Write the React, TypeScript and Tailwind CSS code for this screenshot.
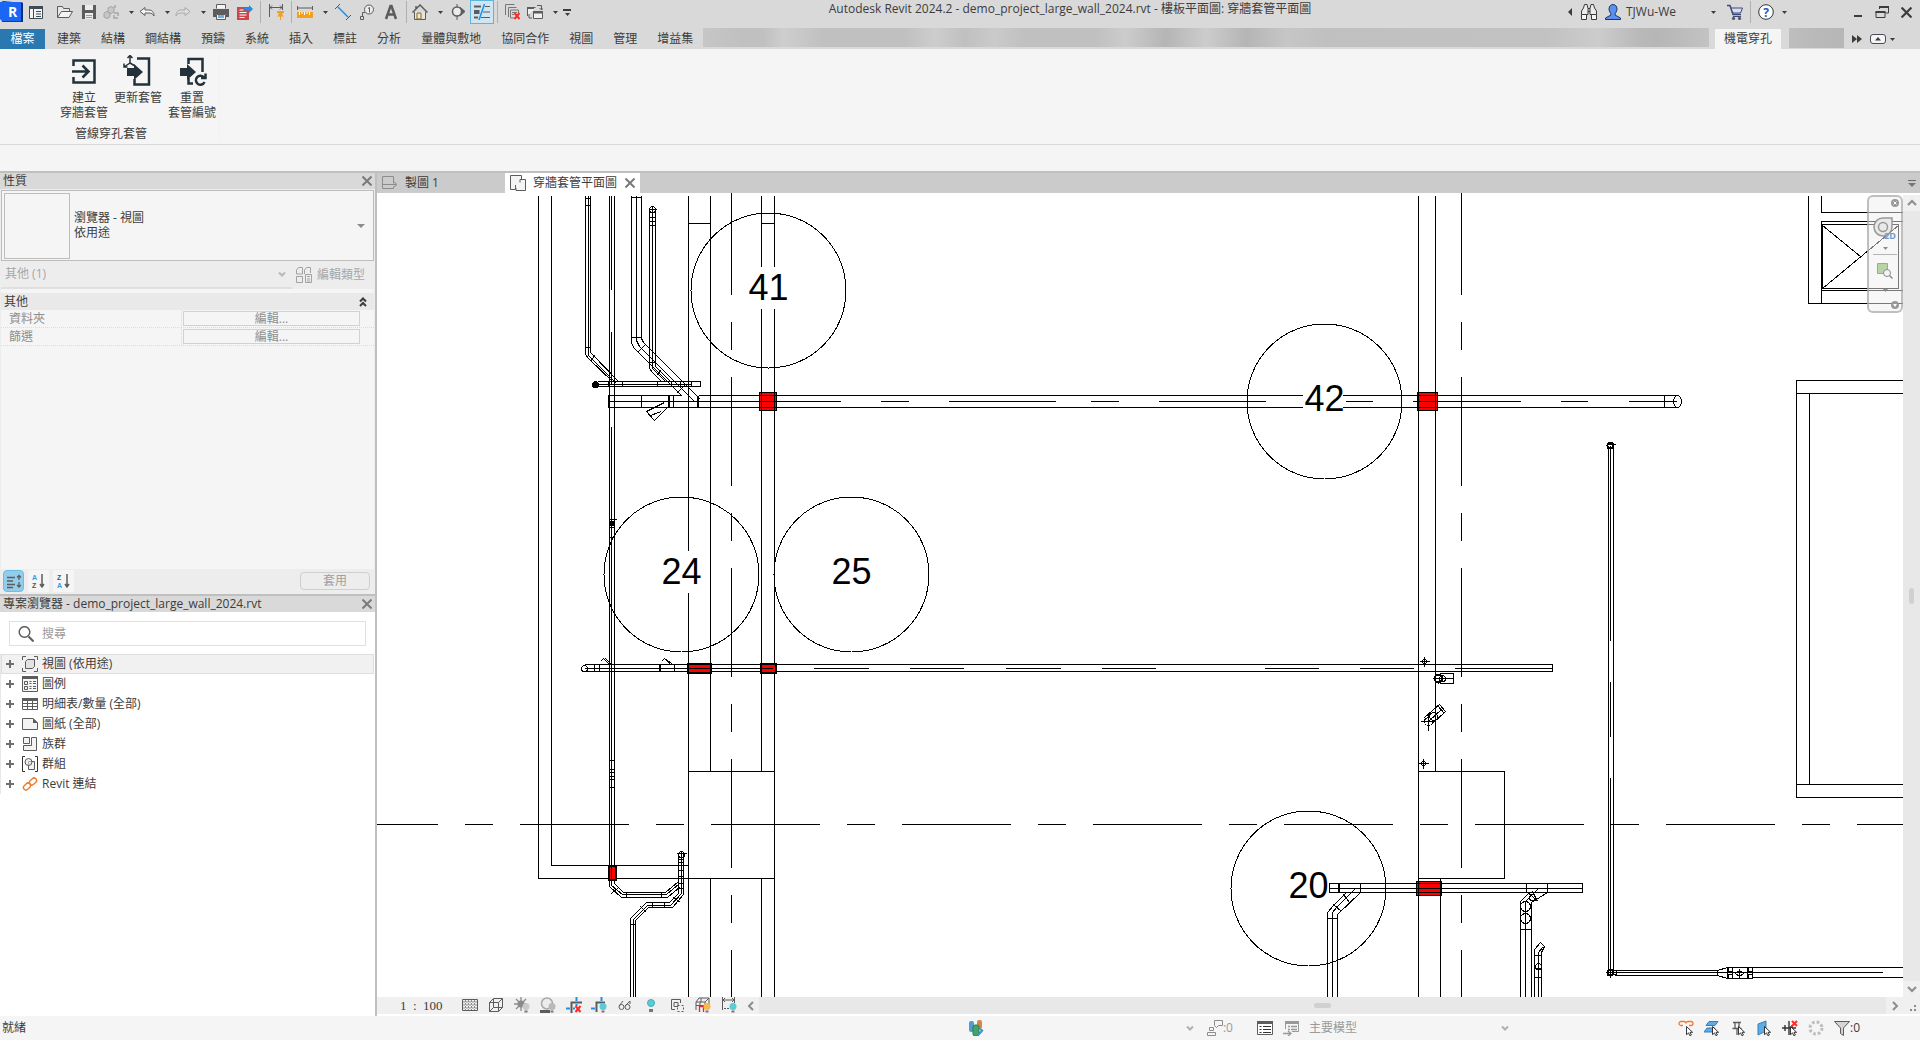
import React, { useState } from "react";
import clsx from "clsx";

const Icon = ({ children, className }: { children: React.ReactNode; className?: string }) => (
  <svg viewBox="0 0 16 16" fill="none" stroke="#5c5c5c" className={clsx("size-4 shrink-0", className)} aria-hidden="true">
    {children}
  </svg>
);

const Caret = ({ className = "text-[#3c3c3c]" }: { className?: string }) => (
  <svg viewBox="0 0 5 3" className={clsx("h-[3px] w-[5px] shrink-0", className)} aria-hidden="true">
    <path d="M0 0h5L2.5 3z" fill="currentColor" />
  </svg>
);

const Chevron = ({ d, className = "text-[#8c8c8c]" }: { d: string; className?: string }) => (
  <svg viewBox="0 0 10 10" fill="none" stroke="currentColor" strokeWidth="2" className={clsx("size-2.5 shrink-0", className)} aria-hidden="true">
    <path d={d} />
  </svg>
);

const CloseMark = ({ className = "size-2.5 text-[#7a7a7a]" }: { className?: string }) => (
  <svg viewBox="0 0 10 10" fill="none" stroke="currentColor" strokeWidth="2" className={clsx("shrink-0", className)} aria-hidden="true">
    <path d="M.5.5l9 9M9.5.5l-9 9" />
  </svg>
);

const Separator = () => <div className="mx-[3px] h-[22px] w-px shrink-0 bg-[#b0b0b0]" />;

const ToolButton = ({ label, split, active, children }: { label: string; split?: boolean; active?: boolean; children: React.ReactNode }) => (
  <>
    <button
      aria-label={label}
      className={clsx(
        "flex h-6 w-6 shrink-0 items-center justify-center",
        split && "pr-1",
        active && "border border-[#5fb3dc] bg-[#cfe6f2]"
      )}
    >
      {children}
    </button>
    {split && (
      <button aria-label={`${label} menu`} className="flex h-6 w-3 shrink-0 items-center justify-center">
        <Caret />
      </button>
    )}
  </>
);

const Cursor = () => <path d="M8.500 6.500v8.200l2-1.800 1.400 2.800 1.500-.7-1.400-2.700h2.600z" fill="#fff" stroke="#222" strokeWidth=".9" />;
const Bulb = ({ fill }: { fill: string }) => (
  <>
    <circle cx="12" cy="9.500" r="3.500" fill={fill} stroke="none" />
    <path d="M10.500 13.500h3v2h-3z" fill="#777" stroke="none" />
  </>
);
const RedX = () => <path d="M9.500 9l5 6M14.500 9l-5 6" stroke="#ff2a2a" strokeWidth="2" />;

const QuickAccess = () => (
  <div className="flex shrink-0 items-center">
    <button aria-label="Revit" className="w-6">
      <svg viewBox="0 0 24 24" className="size-6" aria-hidden="true">
        <path d="M0 3l3-2 20 2v19H2z" fill="#0c3c9c" />
        <path d="M0 2h21v19H2L0 19z" fill="#1a66f5" />
        <path d="M21 2l2 1v19l-2-1z" fill="#0a2f80" />
        <text x="8" y="17" fontFamily="Open Sans, sans-serif" fontSize="14" fontWeight="700" fill="#fff">R</text>
      </svg>
    </button>
    <ToolButton label="Home">
      <Icon>
        <path d="M1.500 2.500h13v12h-13z" fill="#f5f5f5" stroke="#3f4a52" />
        <path d="M1 2h14v3H1z" fill="#3f4a52" stroke="none" />
        <path d="M5.500 5v10M8 7.500h5M8 10h5M8 12.500h5" stroke="#3f4a52" />
      </Icon>
    </ToolButton>
    <div className="w-[5px]" />
    <ToolButton label="Open">
      <Icon>
        <path d="M.500 13.500v-11h5l1 2h6v3" fill="#e8e8e8" />
        <path d="M.500 13.500l4-6h11l-3.500 6z" fill="#f4f4f4" />
      </Icon>
    </ToolButton>
    <ToolButton label="Save">
      <Icon>
        <path d="M1 1h14v14H1z" fill="#5c5c5c" stroke="none" />
        <path d="M4 1h8v5H4zM4 9h8v6H4z" fill="#ececec" stroke="none" />
        <path d="M5 11.500h6M5 13.500h6" stroke="#9a9a9a" />
      </Icon>
    </ToolButton>
    <ToolButton label="Synchronize" split>
      <Icon>
        <path d="M5 4l3-1.500L11 4v4L8 9.500 5 8zM1 9l3-1.500L7 9v4l-3 1.500L1 13z" fill="#c6c6c6" stroke="#a5a5a5" />
        <path d="M12 1v3M11 9h4v3M15 14h-4v-3" stroke="#a5a5a5" strokeWidth="1.500" />
      </Icon>
    </ToolButton>
    <ToolButton label="Undo" split>
      <Icon><path d="M1 7.500l5-4v2.500h4c3 0 5 2 5 6-1-2-2.500-3-5-3H6v2.500z" fill="#f4f4f4" /></Icon>
    </ToolButton>
    <ToolButton label="Redo" split>
      <Icon><path d="M15 7.500l-5-4v2.500H6c-3 0-5 2-5 6 1-2 2.500-3 5-3h4v2.500z" fill="#dedede" stroke="#a8a8a8" /></Icon>
    </ToolButton>
    <ToolButton label="Print">
      <Icon>
        <path d="M3.500 4.500v-4h9v4M3.500 15.500v-5h9v5z" fill="#f4f4f4" />
        <path d="M0 5h16v8h-3v-3H3v3H0z" fill="#5c5c5c" stroke="none" />
        <path d="M5 11h6v3H5z" fill="#6ab0e6" stroke="none" />
      </Icon>
    </ToolButton>
    <ToolButton label="Export PDF">
      <Icon>
        <path d="M0 3h12v13H0z" fill="#c9474b" stroke="none" />
        <path d="M2.500 6h4M2.500 8.500h7M2.500 11h7M2.500 13.500h5" stroke="#fff" />
        <path d="M6 3.500h6V1l4 4-4 4V6.500H9" fill="#1d8fe6" stroke="none" />
      </Icon>
    </ToolButton>
    <Separator />
    <ToolButton label="Aligned dimension">
      <Icon>
        <path d="M1.500 0v13M14.500 0v6M2 3.500h12M4 1.500l-2 2 2 2M12 1.500l2 2-2 2" />
        <path d="M9 7h7v2h-1.500v2l1.500 1.500h-3V16h-1v-3.500H9l1.500-1.500V9H9z" fill="#f2a01e" stroke="none" />
      </Icon>
    </ToolButton>
    <Separator />
    <ToolButton label="Measure" split>
      <Icon>
        <path d="M.500 2v4M15.500 2v4M1 4h14" />
        <path d="M0 8h16v6H0z" fill="#f2a01e" stroke="none" />
        <path d="M2.500 8v3M5 8v2M7.500 8v3M10 8v2M12.500 8v3" stroke="#fff" />
      </Icon>
    </ToolButton>
    <ToolButton label="Dimension">
      <Icon>
        <path d="M3 3l10 10" stroke="#1d8fe6" strokeWidth="1.500" />
        <path d="M0 5l5-5M11 16l5-5" stroke="#555" />
      </Icon>
    </ToolButton>
    <ToolButton label="Tag">
      <Icon>
        <circle cx="10" cy="5.500" r="4.500" fill="#ececec" />
        <path d="M9 4.500l1.500-1v5M6 8.500H3.500v4M1.500 12.500h3v3h-3z" />
      </Icon>
    </ToolButton>
    <ToolButton label="Text">
      <Icon><path d="M3 15L7.500 2h1L13 15M4.500 10.500h7" strokeWidth="2.500" /></Icon>
    </ToolButton>
    <Separator />
    <ToolButton label="3D view" split>
      <Icon>
        <path d="M2.500 8v7.500h11V8" fill="#e4e4e4" />
        <path d="M.500 8.500L8 1l7.500 7.500M4 5V2" strokeWidth="1.500" />
        <path d="M5 9h4v6H5z" fill="#ffe7a8" stroke="#7a6a3a" />
      </Icon>
    </ToolButton>
    <ToolButton label="Section">
      <Icon>
        <circle cx="7" cy="7.500" r="4.500" fill="#ececec" strokeWidth="1.500" />
        <path d="M7 0v3M7 12v4" />
        <path d="M10.500 3.500l4.500 4-4.500 4c2-3 2-5 0-8z" fill="#5c5c5c" />
      </Icon>
    </ToolButton>
    <ToolButton label="Thin lines" active>
      <Icon>
        <path d="M0 2.500h7M0 13.500h4" strokeWidth="2" />
        <path d="M0 8h5.500" strokeWidth="4" />
        <path d="M11 2.500h5M9 8h7M7 13.500h9" />
        <path d="M10.500 0L5 16" stroke="#1d8fe6" strokeWidth="1.500" />
      </Icon>
    </ToolButton>
    <Separator />
    <ToolButton label="Close inactive views">
      <Icon>
        <path d="M.500 11V.500h9M3.500 13V3.500h8M10 14H5.500v-8h8v3" stroke="#777" />
        <path d="M7 8.500h5M7 10.500h2" stroke="#777" />
        <RedX />
      </Icon>
    </ToolButton>
    <ToolButton label="Switch windows" split>
      <Icon>
        <path d="M.500 12V3.500h8M6.500 7.500h9v7h-9z" fill="#f0f0f0" />
        <path d="M6 8.500h10M0 4h7" strokeWidth="2" />
        <path d="M10 1.500h4.500v4M12.500 4l2 2 2-2M2 10v4h3" />
      </Icon>
    </ToolButton>
    <button aria-label="Customize toolbar" className="flex h-6 w-3 flex-col items-center justify-center gap-0.5">
      <span className="h-0.5 w-2 bg-[#3c3c3c]" />
      <Caret />
    </button>
  </div>
);

const AccountBar = () => (
  <div className="flex shrink-0 items-center text-[#3c3c3c]">
    <button aria-label="Collapse search" className="w-2.5 pl-px">
      <svg viewBox="0 0 4 8" className="h-2 w-1" aria-hidden="true"><path d="M4 0v8L0 4z" fill="#3c3c3c" /></svg>
    </button>
    <ToolButton label="Search">
      <Icon>
        <path d="M3.500.500h2.500l1 4v6H.500V7l2-3zM12.500.500H10l-1 4v6h6.500V7l-2-3z" fill="#ececec" stroke="#3a3a3a" />
        <path d="M.500 10.500h5v5h-5zM10.500 10.500h5v5h-5zM7 4.500h2M7 7.500h2" fill="#f5f5f5" stroke="#3a3a3a" />
      </Icon>
    </ToolButton>
    <button className="flex w-[106px] items-center gap-[5px] px-1 text-xs">
      <Icon>
        <path d="M4 5c0-6 8-6 8 0 0 3-2 3.500-2 6l5.500 3v1.500H.500V14L6 11c0-2.500-2-3-2-6z" fill="#5b8ff0" stroke="#22345e" />
      </Icon>
      TJWu-We
    </button>
    <button aria-label="Account menu" className="mr-1 flex w-3 justify-center"><Caret /></button>
    <ToolButton label="App store">
      <Icon>
        <path d="M0 1.500h3l3 9h8" stroke="#3d4a78" strokeWidth="1.500" />
        <path d="M4 4h11.500l-2 5H6z" fill="#d9def0" stroke="#3d4a78" />
        <path d="M6 12.500h8" stroke="#3d4a78" />
        <circle cx="6.500" cy="14.500" r="1.200" fill="#3d4a78" /><circle cx="12.500" cy="14.500" r="1.200" fill="#3d4a78" />
      </Icon>
    </ToolButton>
    <Separator />
    <ToolButton label="Help">
      <Icon>
        <circle cx="8" cy="8" r="7.300" fill="#fff" stroke="#333" />
        <text x="8" y="12.500" textAnchor="middle" fontFamily="Open Sans, sans-serif" fontSize="12" fontWeight="700" fill="#2457c5" stroke="none">?</text>
      </Icon>
    </ToolButton>
    <button aria-label="Help menu" className="flex w-3 justify-center"><Caret /></button>
    <div className="w-14" />
    <ToolButton label="Minimize"><span className="mt-2 h-0.5 w-2 bg-[#3c3c3c]" /></ToolButton>
    <ToolButton label="Restore">
      <Icon><path d="M5.500 5V3h9v6h-3M2 8h9v5.500H2z" stroke="#3c3c3c" /><path d="M5 3h10M1.500 8h10" stroke="#3c3c3c" strokeWidth="2" /></Icon>
    </ToolButton>
    <ToolButton label="Close"><CloseMark className="size-[11px] text-[#3c3c3c]" /></ToolButton>
    <div className="w-0.5" />
  </div>
);

const ribbonTabs = ["建築", "結構", "鋼結構", "預鑄", "系統", "插入", "標註", "分析", "量體與敷地", "協同合作", "視圖", "管理", "增益集"];

const RibbonTabs = () => (
  <nav className="flex h-[21px] items-stretch pt-px text-xs leading-5">
    <button className="w-[45px] shrink-0 bg-[#2a78b0] text-white">檔案</button>
    <div className="flex shrink-0 gap-5 pl-3">
      {ribbonTabs.map((tab) => (
        <button key={tab} className="whitespace-nowrap">{tab}</button>
      ))}
    </div>
    <div className="-mt-px mb-0.5 ml-2.5 flex-1 bg-[linear-gradient(90deg,#c6c6c6,#c0c0c0_4%,#c0c0c0_6%,#cecece_8%,#c0c0c0_12%,#c0c0c0_20%,#cdcdcd_23%,#c0c0c0_26%,#cacaca_29%,#c0c0c0_32%,#c0c0c0_39%,#cccccc_42%,#b5b5b5_46%,#cccccc_50%,#b5b5b5_54%,#c6c6c6_58%,#c0c0c0_62%,#c2c2c2_80%,#c2c2c2_84%,#cccccc_89%,#b9b9b9_93%,#b6b6b6_95%,#c3c3c3)]" />
    <button className="ml-1.5 w-[66px] shrink-0 bg-[#f5f5f5]">機電穿孔</button>
    <div className="-mt-px mb-px ml-2 w-[55px] shrink-0 bg-[linear-gradient(90deg,#bebebe,#b9b9b9_50%,#b6b6b6)]" />
    <button aria-label="More tabs" className="ml-2 flex items-center">
      <svg viewBox="0 0 10 8" className="h-2 w-2.5" aria-hidden="true"><path d="M0 0l5 4-5 4zM5 0l5 4-5 4z" fill="#3c3c3c" /></svg>
    </button>
    <button aria-label="Minimize ribbon" className="mr-[25px] ml-2 flex items-center gap-1">
      <svg viewBox="0 0 16 10" className="h-2.5 w-4" aria-hidden="true">
        <rect x=".5" y=".5" width="15" height="9" rx="2.500" fill="#f5f5f5" stroke="#4a4a5a" />
        <path d="M5 6.500h6L8 3z" fill="#3c3c3c" />
      </svg>
      <Caret />
    </button>
  </nav>
);

const ribbonCommands = [
  {
    lines: ["建立", "穿牆套管"],
    icon: (
      <>
        <path d="M5.500 11V5.500h21v22h-21V22" strokeWidth="2.500" />
        <path d="M4 16.500h16M14.500 10.500l6 6-6 6" strokeWidth="2.500" />
      </>
    ),
  },
  {
    lines: ["更新套管"],
    icon: (
      <>
        <path d="M15 3.500h12v26H12.500V24" strokeWidth="2.500" />
        <path d="M5 13h7V9l9 8-9 8v-4H5z" fill="#22313a" stroke="none" />
        <path d="M8 8V1M5.500 3L8 .500 10.500 3M8 8l-6 4M2 8.500V12h3.500M8 8l5 3" strokeWidth="1.500" />
      </>
    ),
  },
  {
    lines: ["重置", "套管編號"],
    icon: (
      <>
        <path d="M12.500 9V4h14v13M12.500 23v5.500H17" strokeWidth="2.500" />
        <path d="M4 13h7V9l9 8-9 8v-4H4z" fill="#22313a" stroke="none" />
        <path d="M28 22.500a4.500 4.500 0 1 0 .5 4.500M29.500 18.500v4.500h-4.500" strokeWidth="2.500" />
      </>
    ),
  },
];

const Ribbon = () => (
  <div className="flex h-24 border-b border-[#d9d9d9] bg-[#f5f5f5] pl-[57px]">
    <div className="flex flex-col">
      <div className="flex h-[77px] pt-1.5">
        {ribbonCommands.map((command) => (
          <button key={command.lines[0]} className="flex w-[54px] flex-col items-center text-xs leading-[15px] whitespace-nowrap">
            <svg viewBox="0 0 32 32" fill="none" stroke="#22313a" className="mb-[3px] size-8 shrink-0" aria-hidden="true">{command.icon}</svg>
            {command.lines.map((line) => (
              <span key={line}>{line}</span>
            ))}
          </button>
        ))}
      </div>
      <div className="w-[108px] self-start text-center text-xs leading-4">管線穿孔套管</div>
    </div>
    <div className="my-px w-px bg-[#f1f1f1]" />
  </div>
);

const PaletteHeader = ({ title }: { title: string }) => (
  <div className="flex h-4 shrink-0 items-center justify-between bg-[#d9d9d9] px-[3px] leading-4">
    <h2>{title}</h2>
    <button aria-label={`關閉 ${title}`}><CloseMark /></button>
  </div>
);

const sortButtons = [
  { label: "預設排序", on: true },
  { label: "A-Z", on: false, a: "A", b: "Z" },
  { label: "Z-A", on: false, a: "Z", b: "A" },
];

const Properties = () => (
  <section className="flex h-[421px] shrink-0 flex-col bg-[#ededed]">
    <PaletteHeader title="性質" />
    <button aria-haspopup="listbox" className="mx-px mt-px flex h-[71px] shrink-0 items-center gap-1 border border-[#bdbdbd] bg-[#f5f5f5] p-0.5 text-left">
      <span className="h-[66px] w-[66px] shrink-0 border border-[#bdbdbd]" />
      <span className="flex-1 pb-0.5 leading-[15px]">瀏覽器 - 視圖<br />依用途</span>
      <svg viewBox="0 0 8 4" className="mr-1.5 h-1 w-2" aria-hidden="true"><path d="M0 0h8L4 4z" fill="#8c8c8c" /></svg>
    </button>
    <div className="flex h-7 shrink-0 items-center text-[#a6a6a6]">
      <div className="ml-px flex flex-1 items-center self-stretch border-b-2 border-[#e0e0e0] pr-[5px]">
        <select aria-label="類型篩選" disabled className="flex-1 appearance-none pl-1">
          <option>其他 (1)</option>
        </select>
        <Chevron d="M2 3.500L5 6.500 8 3.500" className="text-[#b8b8b8]" />
      </div>
      <button disabled className="ml-1 flex items-center gap-[5px] pr-2.5">
        <Icon>
          <path d="M.500 7V3l2-2.500h4V7zM8.500 7V3l2-2.500h4V6M.500 15.500V9.500h6v6zM9.500 7.500h6v8h-6zM11 9.500h3M11 12h3M11 14h3" stroke="#a3a3a3" />
        </Icon>
        編輯類型
      </button>
    </div>
    <div className="mx-px flex flex-1 flex-col bg-[#f5f5f5] pt-1">
      <div className="flex h-[17px] items-center justify-between bg-[#e9e9e9] pr-1.5 pl-[3px]">
        <h3>其他</h3>
        <Chevron d="M2 4.500L5 1.500 8 4.500M2 9L5 6 8 9" className="text-[#3c3c3c]" />
      </div>
      {["資料夾", "篩選"].map((row) => (
        <div key={row} className="flex h-[18px] items-center border-b border-dotted border-[#dcdcdc] pr-3.5 text-[#8e8e8e]">
          <span className="w-[181px] border-r border-dotted border-[#dcdcdc] pl-2 leading-[17px]">{row}</span>
          <button disabled aria-label={`編輯 ${row}`} className="ml-px h-[15px] flex-1 border border-[#d2d2d2] leading-[13px]">編輯...</button>
        </div>
      ))}
    </div>
    <div className="flex h-[25px] shrink-0 items-center gap-1 pr-[5px] pb-0.5 pl-[3px]">
      {sortButtons.map((s) => (
        <button
          key={s.label}
          aria-label={s.label}
          aria-pressed={s.on}
          className={clsx("flex h-[22px] w-[21px] items-center justify-center border", s.on ? "rounded-sm border-[#6bbce6] bg-[#93cdea]" : "border-transparent bg-[#f5f5f5]")}
        >
          <Icon className="overflow-visible">
            {s.on ? (
              <path d="M1 4.500h8M1 8h6M1 11.500h8M1 14.500h6M13 2v5M11 4.500l2-2 2 2M13 9v5M11 12l2 2 2-2" strokeWidth="1.300" />
            ) : (
              <>
                <text x="1" y="6.500" fontSize="7" fontWeight="700" fontFamily="Liberation Sans, Arial, sans-serif" stroke="none" fill={s.a === "A" ? "#2f9be8" : "#555"}>{s.a}</text>
                <text x="1" y="15" fontSize="7" fontWeight="700" fontFamily="Liberation Sans, Arial, sans-serif" stroke="none" fill={s.b === "A" ? "#2f9be8" : "#555"}>{s.b}</text>
                <path d="M11 1v12M9 11l2 3 2-3" strokeWidth="1.500" />
              </>
            )}
          </Icon>
        </button>
      ))}
      <button disabled className="ml-auto h-[18px] w-[70px] rounded-sm border border-[#cfcfcf] leading-4 text-[#a0a0a0]">套用</button>
    </div>
  </section>
);

const treeItems = [
  {
    label: "視圖 (依用途)",
    icon: (
      <>
        <path d="M4 .500H.500V4M12 .500h3.500V4M.500 12v3.500H4M15.500 12v3.500H12" />
        <path d="M3.500 5.500l2-2h7v7l-2 2h-7z" fill="#e2e2e2" />
      </>
    ),
  },
  {
    label: "圖例",
    icon: (
      <>
        <path d="M.500.500h15v15H.500z" fill="#f5f5f5" /><path d="M0 0h16v3H0z" fill="#5c5c5c" stroke="none" />
        <path d="M2.500 5.500h3v3h-3zM2.500 10.500h3v3h-3zM7.500 5.500h2M11 5.500h3M7.500 7.500h2M11 7.500h3M7.500 10.500h2M11 10.500h3M7.500 12.500h2M11 12.500h3" />
      </>
    ),
  },
  {
    label: "明細表/數量 (全部)",
    icon: (
      <>
        <path d="M0 2h16v3H0z" fill="#5c5c5c" stroke="none" />
        <path d="M.500 2.500h15v11H.500zM.500 7.500h15M.500 10.500h15M5.500 5v9M10.500 5v9" />
      </>
    ),
  },
  {
    label: "圖紙 (全部)",
    icon: (
      <>
        <path d="M.500 2.500H11L15.500 7v6.500H.500z" fill="#f3f3f3" />
        <path d="M11 2v5h5z" fill="#5c5c5c" stroke="none" />
      </>
    ),
  },
  { label: "族群", icon: <path d="M1.500 1.500h6v6h-6zM1.500 9.500h8v-8h5v13h-13z" fill="#f3f3f3" /> },
  {
    label: "群組",
    icon: (
      <>
        <path d="M3 .500H.500v15H3M13 .500h2.500v15H13" stroke="#333" />
        <path d="M6.500 8.500V5.500h6v8h-6z" fill="#f3f3f3" />
        <circle cx="6.500" cy="6" r="3.500" fill="#e4e4e4" fillOpacity=".6" />
      </>
    ),
  },
  {
    label: "Revit 連結",
    icon: (
      <g stroke="#ee7d2f" strokeWidth="1.400">
        <rect x="-4" y="-2.500" width="8" height="5" rx="2.500" transform="translate(5 10.500) rotate(-45)" />
        <rect x="-4" y="-2.500" width="8" height="5" rx="2.500" transform="translate(11 5.500) rotate(-45)" />
      </g>
    ),
  },
];

const ProjectBrowser = () => {
  const [selected, setSelected] = useState(0);
  return (
    <section className="flex min-h-0 flex-1 flex-col border-t-2 border-[#bfbfbf] bg-white">
      <PaletteHeader title="專案瀏覽器 - demo_project_large_wall_2024.rvt" />
      <label className="mx-[9px] mt-[9px] flex h-[25px] shrink-0 items-center gap-2 border border-[#e0e0e0] pl-2">
        <Icon><circle cx="6.500" cy="6" r="5.300" strokeWidth="1.500" /><path d="M10.500 10.500l5 5" strokeWidth="2" /></Icon>
        <input aria-label="搜尋" placeholder="搜尋" className="min-w-0 flex-1 outline-none placeholder:text-[#9a9a9a]" />
      </label>
      <ul className="mt-2 border-l border-[#e8e8e8] pr-px">
        {treeItems.map((item, i) => (
          <li key={item.label}>
            <button
              onClick={() => setSelected(i)}
              className={clsx("flex h-5 w-full items-center gap-1 border pl-1 text-left", i === selected ? "border-[#dedede] bg-[#f1f1f1]" : "border-transparent")}
            >
              <svg viewBox="0 0 8 8" className="mr-1 size-2" aria-hidden="true"><path d="M4 0v8M0 4h8" stroke="#6e6e6e" strokeWidth="2" /></svg>
              <Icon>{item.icon}</Icon>
              {item.label}
            </button>
          </li>
        ))}
      </ul>
    </section>
  );
};

// number bubbles placed beside each wall sleeve
const tags = [
  { n: "41", x: 768, y: 290 },
  { n: "42", x: 1324, y: 401 },
  { n: "24", x: 681, y: 574 },
  { n: "25", x: 851, y: 574 },
  { n: "20", x: 1308, y: 888 },
];

const PlanDrawing = () => (
  <svg className="absolute inset-0 h-full w-full" role="img" aria-label="穿牆套管平面圖" shapeRendering="crispEdges">
    <g transform="translate(-376.500 -192.500)" fill="none" stroke="#000">
      {/* walls */}
      <path d="M538 195V878H774M551 195V865H688M688 195V550M688 592V997M710 195V771M710 878V997M761 195V266M761 308V771M761 878V997M774 195V266M774 308V997M688 771H774M688 223H710M761 223H774" />
      <path d="M1418 195V997M1435 195V771M1440 878V997M1418 771H1504V878H1418" />
      <path d="M1808 195V303H1903M1821 195V212H1903M1903 221H1821V303M1821 290H1903M1822 224H1898V288H1822zM1822 225L1860 256M1822 288L1898 225" />
      <path d="M1903 380H1796V797H1903M1796 393H1903M1809 393V784M1796 784H1903" />
      {/* grid lines */}
      <path d="M731 185V997M1461 185V997M328 824H1903" strokeDasharray="109 27 28 27" />
      {/* pipes on the upper left */}
      <path d="M585 195V354L588 358 613 382M588 195V355L616 383M590 195V352L619 382M585 205H590M585 198H590M585 347H590M590 361L594 355" />
      <path d="M609 195V866M614 195V866M611 195V289M611 331V384M611 426V866M609 537H614M609 760H614M609 769H614M609 772H614M609 776H614M609 779H614M609 787H614M608 519H616M609 527H614" />
      <path d="M610 521h4v4h-4z" fill="#000" />
      <path d="M631 195V343L634 348 681 395M636 195V340L639 346 694 401M641 195V338L643 342 700 399M631 197H641M631 337H641M637 352L645 344M676 393L684 385" />
      <path d="M649 209V368L652 372 662 382M652 209V368L666 382M655 209V366L671 382M649 217H655M649 221H655M649 225H655M649 362H655M656 375L660 370" />
      <circle cx="652" cy="209" r="3" /><path d="M652 205V213M648 209H656" />
      <path d="M597 381H700V386H597M593 384H690M608 381V386M622 381V386M657 381V386M671 381V386M680 381V386M691 381V386" />
      <circle cx="595" cy="384" r="3" fill="#000" />
      {/* duct through sleeves 41 and 42 */}
      <path d="M1676 395H1342M1302 395H698M681 395H608V407H1302M1342 407H1676M608 401H840M641 395V407M673 395V407M1664 395V407" />
      <path d="M668.500 395V407M697.500 395V407" strokeWidth="2" />
      <path d="M880 401H908M948 401H1055M1090 401H1118M1158 401H1265M1345 401H1372M1412 401H1520M1560 401H1587M1628 401H1676" />
      <ellipse cx="1677" cy="401" rx="4" ry="6" />
      <path d="M664 402L646 411 654 420 667 407M661 411L650 415" />
      {/* pipe through sleeves 24 and 25 */}
      <path d="M584 664H1552V671H584M584 668H772M594 664V671M599 664V671M674 664V671M614 664V671M813 668H868M909 668H963M1005 668H1060M1101 668H1155M1264 668H1318M1359 668H1413M1454 668H1552" />
      <path d="M659.500 664V671" strokeWidth="2" />
      <circle cx="584" cy="668" r="3" />
      <path d="M600 661L603 658 610 665M605 658L611 664M661 661L664 658 671 665M666 659L672 664" />
      {/* bottom left loops */}
      <path d="M609 880V886L621 897H667L680 886M611 880V885L622 894H666L679 883M614 880V883L623 892H665L678 881M626 892V897M661 892V897M611 893L618 887" />
      <path d="M683 853V894L672 907H648L635 920V997M681 853V893L670 905H647L633 919V997M678 853V893L669 902H646L630 918V997M630 924H635M652 902V907M664 902V907M678 870H683M678 876H683M678 883H683M678 888H683M673 897L680 902M640 906L646 912" />
      <circle cx="681" cy="854" r="3" /><path d="M676 853H686M681 850V860M678 859H683M678 862H683" />
      {/* pipe through sleeve 20 */}
      <path d="M1329 883H1582V892H1329zM1329 888H1582M1360 883V892M1385 883V892M1526 883V892M1547 883V892" />
      <path d="M1338.500 883V892" strokeWidth="2" />
      <path d="M1327 997V912L1333 905 1346 892M1332 997V912L1337 906 1355 888M1337 997V914L1360 892M1327 918H1337M1333 904L1341 911M1343 894L1349 902" />
      <path d="M1520 997V901L1529 892M1525 997V901L1537 889M1531 997V902L1547 892M1520 929H1531M1527 892L1538 901M1532 891L1536 899" />
      <circle cx="1525" cy="906" r="5" /><circle cx="1525" cy="918" r="5" /><circle cx="1532" cy="897" r="3" />
      <path d="M1534 997V949L1540 942 1544 946 1541 952V997M1538 997V952L1542 947M1534 955H1541M1534 968H1541M1534 977H1541" />
      <circle cx="1538" cy="966" r="3" />
      {/* risers */}
      <path d="M1419 661H1429M1424 656V666M1418 763H1428M1423 758V768" />
      <circle cx="1424" cy="661" r="2" /><circle cx="1423" cy="763" r="2" />
      <path d="M1439 673H1453V683H1439M1434 678H1453" />
      <circle cx="1438" cy="678" r="4" strokeWidth="2" /><circle cx="1442" cy="678" r="3" />
      <path d="M1420 721H1433M1428 713V730M1424 717L1439 704 1445 711 1432 723M1428 721L1442 708M1437 705L1444 713" />
      <circle cx="1428" cy="721" r="4" /><circle cx="1433" cy="716" r="4" />
      {/* riser run on the right */}
      <path d="M1608 445V970M1613 445V970M1610 445V640M1610 681V736M1610 777V972M1614 970H1717L1727 967M1614 972H1727M1614 975H1717L1727 978M1717 970V975M1752 967H1903M1727 972H1882M1752 977H1903M1727 967H1752V978H1727zM1732 967V978M1747 967V978" />
      <path d="M1728 967h4v4h-4zM1728 974h4v4h-4zM1748 967h4v4h-4zM1748 974h4v4h-4zM1735 973l4-3 4 3-4 3zM1739 968V978" />
      <circle cx="1610" cy="445" r="3" strokeWidth="2" /><circle cx="1610" cy="972" r="3" strokeWidth="2" />
      <path d="M1606 444H1615M1606 972H1616M1610 967V977M1613 970h3v4h-3z" />
      {/* sleeves */}
      <g fill="#f00">
        <path d="M759 392h17v18h-17zM1417 392h20v18h-20z" />
        <path d="M687.500 663.500h23v9h-23zM760.500 663.500h15v9h-15z" strokeWidth="2" />
        <path d="M1416 881h25v14h-25z" />
        <path d="M608.500 865.500h7v14h-7z" strokeWidth="2" />
      </g>
      <path d="M761 392V410M774 392V410M759 395H776M759 401H776M759 407H776M1418 392V410M1435 392V410M1417 395H1437M1417 401H1437M1417 407H1437" />
      <path d="M687 668H711M760 668H772M1416 883H1441M1416 888H1441M1416 892H1441M1418 881V895M1440 881V895M611 864V880" />
      {tags.map((tag) => (
        <g key={tag.n}>
          <circle cx={tag.x} cy={tag.y} r="77.500" />
          <text x={tag.x} y={tag.y + 9} textAnchor="middle" fontFamily="Liberation Sans, Arial, sans-serif" fontSize="36" fill="#000" stroke="none">{tag.n}</text>
        </g>
      ))}
    </g>
  </svg>
);

const NavigationBar = () => (
  <div className="absolute top-0.5 right-0 flex h-[118px] w-9 flex-col items-center rounded-md border-2 border-[#999]/60 bg-[#f0f0f0]/50 text-[#8c8c8c]">
    <button aria-label="關閉導覽列" className="mr-0.5 self-end">
      <svg viewBox="0 0 8 8" className="mt-0.5 size-2" aria-hidden="true"><circle cx="4" cy="4" r="4" fill="#999" /><path d="M2.500 2.500l3 3M5.500 2.500l-3 3" stroke="#fff" /></svg>
    </button>
    <button aria-label="2D 導覽輪" className="mt-2.5 flex flex-col items-center gap-1.5">
      <svg viewBox="0 0 26 24" className="h-6 w-[26px]" aria-hidden="true">
        <path d="M11 1h9v9a9 9 0 1 1-9-9z" fill="#e9e9e9" stroke="#999" strokeWidth="1.500" />
        <circle cx="11" cy="10" r="4.500" fill="none" stroke="#999" strokeWidth="1.500" />
        <text x="12" y="22" fontFamily="Open Sans, sans-serif" fontSize="9" fontWeight="700" fill="#6f9ccb">2D</text>
      </svg>
      <Caret className="text-[#8c8c8c]" />
    </button>
    <hr className="mt-1 w-6 border-[#b5b5b5]" />
    <button aria-label="縮放" className="mt-2 flex flex-col items-center gap-2.5">
      <svg viewBox="0 0 16 16" className="size-4" aria-hidden="true">
        <path d="M.500.500h10v10H.500z" fill="#b9d3a6" stroke="#8fb67a" />
        <circle cx="10" cy="10" r="3.500" fill="#f4f4f4" stroke="#8c8c8c" /><path d="M12.500 12.500l3 3" stroke="#8c8c8c" strokeWidth="1.500" />
      </svg>
      <Caret className="text-[#8c8c8c]" />
    </button>
    <button aria-label="導覽列選項" className="mt-auto mr-0.5 mb-0.5 self-end">
      <svg viewBox="0 0 8 8" className="size-2" aria-hidden="true"><circle cx="4" cy="4" r="4" fill="#999" /><path d="M2 3h4L4 6z" fill="#fff" /></svg>
    </button>
  </div>
);

const viewControls = [
  {
    label: "詳細等級",
    icon: (
      <>
        <path d="M1 5h14M1 8h14M1 11h14M3.500 3v10M6.500 3v10M9.500 3v10M12.500 3v10" stroke="#8a8a8a" strokeDasharray="2 1" />
        <path d="M.500 2.500h15v11H.500z" />
      </>
    ),
  },
  { label: "視覺型式", icon: <path d="M1.500 5.500h9v9h-9zM1.500 5.500l4-4h9l-4 4M14.500 1.500v9l-4 4M5.500 2v8.500h9M5.500 10.500l-4 4" /> },
  {
    label: "太陽路徑",
    icon: (
      <>
        <path d="M7 0v14M0 7h13M2 2l10 10M12 2L2 12" stroke="#8a8a8a" strokeWidth="1.300" />
        <circle cx="7" cy="7" r="3.500" fill="#8a8a8a" stroke="none" />
        <Bulb fill="#c9c9c9" />
      </>
    ),
  },
  {
    label: "陰影",
    icon: (
      <>
        <path d="M0 14.500h10" strokeWidth="3" />
        <circle cx="7" cy="6.500" r="5.500" fill="#ececec" stroke="#a8a8a8" strokeWidth="1.500" />
        <Bulb fill="#b9b9b9" />
      </>
    ),
  },
  {
    label: "裁剪視圖",
    icon: (
      <>
        <path d="M5.500 16V5.500H16" strokeWidth="2" />
        <path d="M10.500 0v4M10.500 7v2M0 11.500h4M7 11.500h2" stroke="#1d8fe6" strokeWidth="2" />
        <RedX />
      </>
    ),
  },
  {
    label: "顯示裁剪區域",
    icon: (
      <>
        <path d="M5.500 15V5.500H14" strokeWidth="2" />
        <path d="M10.500 0v4M0 11.500h4" stroke="#1d8fe6" strokeWidth="2" />
        <Bulb fill="#5bcbd6" />
      </>
    ),
  },
  {
    label: "暫時隱藏",
    icon: (
      <>
        <circle cx="4.500" cy="10" r="2.500" /><circle cx="10.500" cy="10" r="2.500" />
        <path d="M2 9l4-5M8 9l5-5v3" />
      </>
    ),
  },
  {
    label: "顯示隱藏元素",
    icon: (
      <>
        <circle cx="8" cy="6" r="3.500" fill="#5bcbd6" stroke="#43aebb" />
        <path d="M6 12h4v3H6z" fill="#777" stroke="none" />
      </>
    ),
  },
  { label: "暫時視圖性質", icon: <><path d="M6 12.500H2.500v-10h9V6M5 5.500h4v4H5z" /><path d="M8.500 8.500h6v6h-6z" strokeDasharray="2 2" /></> },
  {
    label: "分析模型",
    icon: (
      <>
        <path d="M1 13V5l3-4h10v7M1 5h9l4-4M10 5v4M5 5v3M6 1v4M1 8.500h8" />
        <path d="M4.500 9v6M8.500 9v6M4 9.500h5" stroke="#d03030" strokeWidth="1.300" />
        <Bulb fill="#fdb64a" />
      </>
    ),
  },
  {
    label: "顯示約束",
    icon: (
      <>
        <path d="M1.500 0v13M13.500 0v6M2 3h11M4 1L2 3l2 2M11 1l2 2-2 2" />
        <path d="M3 11.500h6" strokeDasharray="2 1" />
        <Bulb fill="#5bcbd6" />
      </>
    ),
  },
];

const ViewArea = () => (
  <main className="flex min-w-0 flex-1 flex-col bg-white">
    <div className="flex h-5 shrink-0 bg-[#cbcbcb] text-xs">
      <button className="flex w-32 shrink-0 items-center gap-[7px] pl-[5px]">
        <Icon><path d="M.500 1.500h11v7M.500 1.500v12h11v-2M0 9.500h14M12 7l3 2.500-3 2.500" stroke="#8c8c8c" /></Icon>
        製圖 1
      </button>
      <div className="flex w-[135px] shrink-0 items-center gap-2 bg-white pl-[5px]">
        <button className="flex items-center gap-[7px]">
          <Icon><path d="M5.500 14.500h-5v-14h11v4M5.500 14.500v-4.500M6 15.500h9.500v-11H10v3M6 15.500V13" fill="#f4f4f4" /></Icon>
          穿牆套管平面圖
        </button>
        <button aria-label="關閉視圖"><CloseMark /></button>
      </div>
      <button aria-label="視圖清單" className="mr-1 ml-auto flex flex-col items-center justify-center gap-0.5">
        <span className="h-px w-2 bg-[#666]" />
        <svg viewBox="0 0 8 4" className="h-1 w-2" aria-hidden="true"><path d="M0 0h8L4 4z" fill="#777" /></svg>
      </button>
    </div>
    <div className="flex min-h-0 flex-1">
      <div className="relative min-w-0 flex-1 overflow-hidden">
        <PlanDrawing />
        <NavigationBar />
      </div>
      <div className="mt-0.5 flex w-[17px] shrink-0 flex-col items-center justify-between bg-[#e8e8e8]">
        <button aria-label="向上捲動" className="flex h-4 w-full items-center justify-center bg-[#f0f0f0]"><Chevron d="M1 7L5 3 9 7" /></button>
        <div className="h-4 w-[5px] rounded-sm bg-[#d0d0d0]" />
        <button aria-label="向下捲動" className="flex h-4 w-full items-center justify-center bg-[#f0f0f0]"><Chevron d="M1 3L5 7 9 3" /></button>
      </div>
    </div>
    <div className="mb-0.5 flex h-[17px] shrink-0 bg-[#f0f0f0]">
      <button className="w-[85px] shrink-0 pl-[23px] text-left font-['Liberation_Serif',serif] text-[13px] leading-4 whitespace-pre">1  :  100</button>
      <div className="flex w-[281px] shrink-0 justify-between pr-1.5">
        {viewControls.map((control) => (
          <button key={control.label} aria-label={control.label} className="flex">
            <Icon>{control.icon}</Icon>
          </button>
        ))}
      </div>
      <button aria-label="向左捲動" className="flex w-4 shrink-0 items-center justify-center"><Chevron d="M7 1L3 5 7 9" /></button>
      <div className="flex flex-1 items-center justify-center bg-[#e8e8e8]">
        <div className="h-[5px] w-[17px] rounded-sm bg-[#d0d0d0]" />
      </div>
      <button aria-label="向右捲動" className="flex w-[17px] shrink-0 items-center justify-center"><Chevron d="M3 1L7 5 3 9" /></button>
      <svg viewBox="0 0 17 17" className="w-[17px] shrink-0" aria-hidden="true"><path d="M7 12h2v2H7zM11 12h2v2h-2zM11 8h2v2h-2z" fill="#8c8c8c" /></svg>
    </div>
  </main>
);

const selectionToggles = [
  { label: "選取連結", icon: <><path d="M5 5.500H3a2 2 0 0 1 0-4h3a2 2 0 0 1 2 2 2 2 0 0 1 2-2h3a2 2 0 0 1 0 4h-2" stroke="#ee7d2f" strokeWidth="1.300" /><Cursor /></> },
  { label: "選取參考底圖", icon: <><path d="M5 1.500h9l-3 4H2zM3 8h8l-3 4H0z" fill="#5fabe3" stroke="#3580bb" /><Cursor /></> },
  { label: "選取鎖定元素", icon: <><path d="M3 2.500h8M5 3v5M9 3v5M2.500 8.500h9M7 9v6" strokeWidth="1.300" /><Cursor /></> },
  { label: "依面選取", icon: <><path d="M2 4l8-3v10l-8 4z" fill="#5fabe3" stroke="#3580bb" /><Cursor /></> },
  { label: "選取時拖曳", icon: <><path d="M0 8h14M7 1v14M3 5v6M10 5v6" stroke="#333" strokeWidth="1.400" /><Cursor /><path d="M10 1l5 5M15 1l-5 5" stroke="#ff2a2a" strokeWidth="2" /></> },
  { label: "背景程序", icon: <circle cx="8" cy="8" r="6" stroke="#bdbdbd" strokeWidth="3" strokeDasharray="2.700 2" /> },
];

const StatusBar = () => (
  <footer className="flex h-6 shrink-0 items-center bg-[#f5f5f5] text-xs">
    <div className="w-[968px] pl-0.5">就緒</div>
    <button aria-label="工作共用">
      <Icon>
        <rect x="1" y="1" width="5" height="11" rx="2" fill="#4f9bd9" stroke="none" />
        <rect x="9" y="0" width="5" height="9" rx="2" fill="#d9824a" stroke="none" />
        <rect x="5" y="5" width="6" height="11" rx="2" fill="#3fa667" stroke="#2c7f4b" />
        <path d="M10 15l4-4M12 9l3 2" stroke="#3b8fd8" strokeWidth="2" />
      </Icon>
    </button>
    <div className="flex-1" />
    <div className="flex items-center text-[#9a9a9a]">
      <button aria-label="工作集"><Chevron d="M2 3.500L5 6.500 8 3.500" className="text-[#b0b0b0]" /></button>
      <button className="ml-3 flex items-center">
        <Icon><path d="M7.500 5.500v-5h8v5h-4l-2 2zM2.500 7.500h4v3h-4zM.500 15.500v-3h8v3z" stroke="#8c8c8c" /></Icon>:0
      </button>
      <button aria-label="設計選項" className="ml-6">
        <Icon>
          <path d="M.500 1.500h15v13H.500z" fill="#fff" /><path d="M0 1h16v3H0z" fill="#5c5c5c" stroke="none" />
          <path d="M2.500 6.500h2M6 6.500h8M2.500 9.500h2M6 9.500h8M2.500 12.500h2M6 12.500h8" stroke="#333" />
        </Icon>
      </button>
      <button aria-label="加入設計選項" className="ml-2.5">
        <Icon>
          <path d="M2.500 9V1.500h13v10H9" stroke="#999" /><path d="M2 1h14v3H2z" fill="#999" stroke="none" />
          <path d="M5 6.500h2M8 6.500h6M5 9.500h2M8 9.500h6M0 13.500h7M5 11l3 2.500-3 2.500" stroke="#999" strokeWidth="1.300" />
        </Icon>
      </button>
      <select aria-label="主要模型" className="ml-2.5 w-[191px] appearance-none"><option>主要模型</option></select>
      <Chevron d="M2 3.500L5 6.500 8 3.500" className="text-[#b0b0b0]" />
    </div>
    <div className="ml-[168px] flex items-center gap-[10px] pr-[60px] text-[#3c3c3c]">
      {selectionToggles.map((toggle) => (
        <button key={toggle.label} aria-label={toggle.label}><Icon>{toggle.icon}</Icon></button>
      ))}
      <button className="flex items-center">
        <Icon><path d="M.500 1.500h15L9.500 8v7.500l-3-2V8z" fill="#d4d4d4" /></Icon>:0
      </button>
    </div>
  </footer>
);

export default function App() {
  return (
    <div className="flex h-screen flex-col overflow-hidden bg-[#d9d9d9] font-['Open_Sans','Noto_Sans_CJK_TC',sans-serif] text-xs text-[#3c3c3c]">
      <header className="shrink-0">
        <div className="flex h-7 items-start">
          <QuickAccess />
          <h1 className="flex-1 truncate pt-px text-center leading-4">Autodesk Revit 2024.2 - demo_project_large_wall_2024.rvt - 樓板平面圖: 穿牆套管平面圖</h1>
          <AccountBar />
        </div>
        <RibbonTabs />
        <Ribbon />
        <div className="h-[26px] bg-[#f5f5f5]" />
      </header>
      <div className="flex min-h-0 flex-1 border-t-2 border-[#bfbfbf]">
        <aside className="flex w-[375px] shrink-0 flex-col">
          <Properties />
          <ProjectBrowser />
        </aside>
        <div className="w-0.5 shrink-0 bg-[#bfbfbf]" />
        <ViewArea />
      </div>
      <StatusBar />
    </div>
  );
}
